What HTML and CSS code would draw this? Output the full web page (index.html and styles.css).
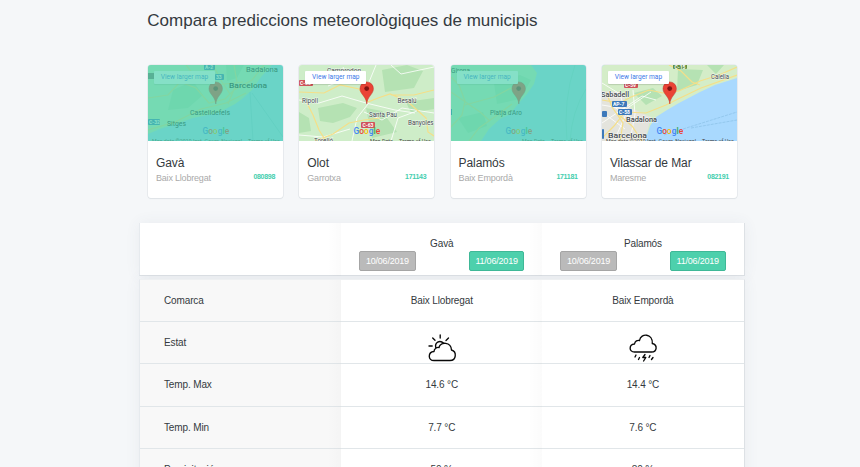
FILE: index.html
```html
<!DOCTYPE html>
<html lang="ca">
<head>
<meta charset="utf-8">
<title>Compara prediccions</title>
<link rel="stylesheet" href="styles.css">
</head>
<body>
<svg class="defs" width="0" height="0" aria-hidden="true">
  <defs>
    <g id="pin">
      <path d="M67.800 39C67.200 31 61 29.500 61 23.600a6.700 6.700 0 0 1 13.400 0C74.400 29.500 68.400 31 67.800 39z" fill="#ea4335" stroke="#b8322a" stroke-width=".5"/>
      <circle cx="67.700" cy="23.600" r="2.400" fill="#811411"/>
    </g>
  </defs>
</svg>
<main>
  <h1>Compara prediccions meteorològiques de municipis</h1>
  <section class="cards">
    <article class="card selected">
      <div class="map">
        <svg viewBox="0 0 135 76">
          <rect width="135" height="76" fill="#aadaff"/>
          <path d="M0 0H124L113 12 104 25 94 34 87 39 70 48 45 53 28 59 12 64 0 69z" fill="#cdebc2"/>
          <path d="M25 25l20-9 10 14-15 13-20 2zM78 0l18 0-7 13-10 3z" fill="#b8e2b2"/>
          <g class="road"><path d="M0 33L20 30 32 17 48 23 61 38 77 34 86 25 104 15 116 0M0 65L27 57 53 44 78 38 98 28M65 0L74 17 82 29M38 0L49 14 68 20 95 17M86 0L89 17 80 39"/></g>
          <path d="M102 27L105 76M104 28L135 72" fill="none" stroke="#82bddd" stroke-width=".5"/>
          <g class="shield blue"><rect x="56" y="-1" width="11" height="6"/><rect x="67" y="9" width="9" height="6"/><rect x="0" y="54" width="12" height="6"/></g>
          <g class="shield-text"><text x="57" y="4">A-2</text><text x="68" y="14">33</text><text x="1" y="59">C-32</text></g>
          <rect x="0" y="8" width="6" height="6" fill="#746c65"/>
          <text class="place" x="98" y="6.500" textLength="32" lengthAdjust="spacingAndGlyphs">Badalona</text>
          <text class="place city" x="81" y="23" textLength="38" lengthAdjust="spacingAndGlyphs">Barcelona</text>
          <text class="place" x="42" y="49.500" textLength="40" lengthAdjust="spacingAndGlyphs">Castelldefels</text>
          <text class="place" x="19" y="60.500" textLength="19" lengthAdjust="spacingAndGlyphs">Sitges</text>
          <use href="#pin"/>
          <text class="google" x="54.500" y="69"><tspan class="gb">G</tspan><tspan class="gr">o</tspan><tspan class="gy">o</tspan><tspan class="gb">g</tspan><tspan class="gg">l</tspan><tspan class="gr">e</tspan></text>
          <text class="credit" x="4" y="77.500" textLength="90" lengthAdjust="spacingAndGlyphs">Map data ©2019 Inst. Geogr. Nacional</text><text class="credit" x="100" y="77.500" textLength="32" lengthAdjust="spacingAndGlyphs">Terms of Use</text>
        </svg>
        <span class="larger">View larger map</span>
      </div>
      <div class="info"><h2>Gavà</h2><div class="meta"><span>Baix Llobregat</span><b>080898</b></div></div>
    </article>
    <article class="card">
      <div class="map">
        <svg viewBox="0 0 135 76">
          <rect width="135" height="76" fill="#ceedc8"/>
          <path d="M19 43l25-5 14 5-7 9-17 6-13-2zM83 5l25-5 16 6-9 17-29 4zM67 43l16 3 15 21-25 6zM107 37l28-4v11l-23 4zM0 47l10 6 2 13-12 2z" fill="#b5e2b3"/>
          <g class="small-road"><path d="M0 35L20 38 43 31 67 38 96 45 116 48M44 2L49 13 29 21M77 0L68 22 69 39 58 53 53 76M65 47l18 8 20-12 32 5M0 70l24 2 27-8M92 0l10 9 33-7M92 76l7-23 19-7"/></g>
          <g class="road"><path d="M0 27L25 28 41 20 60 24 69 37 79 33 91 29 108 36 118 45 127 53 129 67 135 71M8 38L14 50 20 65 27 76M16 76L34 69 50 58 65 55 81 53M92 30L115 30 135 25"/></g>
          <g class="shield red"><rect x="0" y="15" width="14" height="6"/><rect x="62" y="57" width="14" height="6"/></g>
          <g class="shield-text"><text x="1" y="20">C-26</text><text x="63.500" y="62">C-63</text></g>
          <text class="place" x="28" y="8" textLength="34" lengthAdjust="spacingAndGlyphs">Camprodon</text>
          <text class="place" x="3" y="38" textLength="16" lengthAdjust="spacingAndGlyphs">Ripoll</text>
          <text class="place" x="98.500" y="38" textLength="19" lengthAdjust="spacingAndGlyphs">Besalú</text>
          <text class="place" x="70" y="52" textLength="28" lengthAdjust="spacingAndGlyphs">Santa Pau</text>
          <text class="place" x="109" y="59.500" textLength="25.500" lengthAdjust="spacingAndGlyphs">Banyoles</text>
          <text class="place" x="15" y="77.500" textLength="19" lengthAdjust="spacingAndGlyphs">Torelló</text>
          <use href="#pin"/>
          <text class="google" x="54.500" y="69"><tspan class="gb">G</tspan><tspan class="gr">o</tspan><tspan class="gy">o</tspan><tspan class="gb">g</tspan><tspan class="gg">l</tspan><tspan class="gr">e</tspan></text>
          <text class="credit" x="71" y="77.500" textLength="23" lengthAdjust="spacingAndGlyphs">Map Data</text><text class="credit" x="100" y="77.500" textLength="32" lengthAdjust="spacingAndGlyphs">Terms of Use</text>
        </svg>
        <span class="larger">View larger map</span>
      </div>
      <div class="info"><h2>Olot</h2><div class="meta"><span>Garrotxa</span><b>171143</b></div></div>
    </article>
    <article class="card selected">
      <div class="map">
        <svg viewBox="0 0 135 76">
          <rect width="135" height="76" fill="#aadaff"/>
          <path d="M0 0H80L86 8 83 19 76 29 68 38 59 49 49 54 38 64 30 76H0z" fill="#cdebc2"/>
          <path d="M43 18l26-8 11 5-11 19-23 5zM7 53l25-6 4 14-19 7z" fill="#b8e2b2"/>
          <g class="road"><path d="M0 27L13 36 29 47 39 56M0 62L11 50 14 36 8 20 0 12M14 40L43 32 60 23 68 34M18 76L28 63 45 51 61 39"/></g>
          <path d="M124 0q-12 35-8 76M135 24q-14 22-16 52" fill="none" stroke="#8acbd8" stroke-width=".5"/>
          <text class="place" x="0" y="8" textLength="19" lengthAdjust="spacingAndGlyphs">Girona</text>
          <rect x="0" y="44" width="1" height="6" fill="#226ba8"/>
          <text class="place" x="39" y="50" textLength="32" lengthAdjust="spacingAndGlyphs">Platja d'Aro</text>
          <use href="#pin"/>
          <text class="google" x="54.500" y="69"><tspan class="gb">G</tspan><tspan class="gr">o</tspan><tspan class="gy">o</tspan><tspan class="gb">g</tspan><tspan class="gg">l</tspan><tspan class="gr">e</tspan></text>
          <text class="credit" x="71" y="77.500" textLength="23" lengthAdjust="spacingAndGlyphs">Map Data</text><text class="credit" x="100" y="77.500" textLength="32" lengthAdjust="spacingAndGlyphs">Terms of Use</text>
        </svg>
        <span class="larger">View larger map</span>
      </div>
      <div class="info"><h2>Palamós</h2><div class="meta"><span>Baix Empordà</span><b>171181</b></div></div>
    </article>
    <article class="card">
      <div class="map">
        <svg viewBox="0 0 135 76">
          <rect width="135" height="76" fill="#a9d9fe"/>
          <path d="M0 0H135V13L113 20 98 27 77 38 65 45 54 52 48 61 43 76H0z" fill="#d4edc8"/>
          <path d="M76 4l25 1-6 15-20 6zM32 28l19-5 9 8-16 9zM14 62l12-5 11 5-15 5zM105 0l17 0-8 9z" fill="#b5e2b3"/>
          <path d="M0 26l19 1 10 16 20 9-6 24H0z" fill="#e4e4dd"/>
          <g class="small-road"><path d="M0 18L18 29 24 49 12 76M0 58L40 31 54 35M9 40L33 55 46 53M0 40L24 44 49 27M31 25L33 49 28 76M0 47L23 64"/></g>
          <g class="road"><path d="M0 35L18 38 29 32 47 25 61 28 77 26 98 16 117 10 135 2M0 73L12 61 23 47 44 48 64 40 76 34 99 23 135 10M4 27L10 42 21 58 18 76M67 0L79 6 90 17 98 20M40 76L30 61 17 50"/></g>
          <path d="M62 70L135 47M89 63L135 55" fill="none" stroke="#7fb6dd" stroke-width=".5" stroke-dasharray="3 1"/>
          <g class="shield blue"><rect x="10" y="36" width="15" height="6"/><rect x="16" y="44" width="14" height="6"/><rect x="0" y="46" width="5" height="6"/><rect x="0" y="64" width="2" height="10"/></g>
          <g class="shield red"><rect x="22" y="17" width="14" height="6"/></g>
          <rect x="71" y="-1" width="14" height="5" rx="1" fill="#619044"/>
          <g class="shield-text"><text x="11" y="41">AP-7</text><text x="17" y="49">C-58</text><text x="23" y="22">C-59</text><text x="72.500" y="3.500">C-15</text></g>
          <text class="place" x="109" y="13.500" textLength="18" lengthAdjust="spacingAndGlyphs">Calella</text>
          <text class="place medium" x="-1" y="32" textLength="28" lengthAdjust="spacingAndGlyphs">Sabadell</text>
          <text class="place medium" x="24" y="57" textLength="31" lengthAdjust="spacingAndGlyphs">Badalona</text>
          <text class="place city" x="6" y="73" textLength="39" lengthAdjust="spacingAndGlyphs">Barcelona</text>
          <use href="#pin"/>
          <text class="google" x="54.500" y="69"><tspan class="gb">G</tspan><tspan class="gr">o</tspan><tspan class="gy">o</tspan><tspan class="gb">g</tspan><tspan class="gg">l</tspan><tspan class="gr">e</tspan></text>
          <text class="credit" x="4" y="77.500" textLength="90" lengthAdjust="spacingAndGlyphs">Map data ©2019 Inst. Geogr. Nacional</text><text class="credit" x="100" y="77.500" textLength="32" lengthAdjust="spacingAndGlyphs">Terms of Use</text>
        </svg>
        <span class="larger">View larger map</span>
      </div>
      <div class="info"><h2>Vilassar de Mar</h2><div class="meta"><span>Maresme</span><b>082191</b></div></div>
    </article>
  </section>
  <section class="comparison">
    <header class="row heading">
      <div class="label"></div>
      <div class="cell"><span>Gavà</span><div class="dates"><button>10/06/2019</button><button class="active">11/06/2019</button></div></div>
      <div class="cell"><span>Palamós</span><div class="dates"><button>10/06/2019</button><button class="active">11/06/2019</button></div></div>
    </header>
    <div class="body">
      <div class="row"><div class="label">Comarca</div><div class="cell">Baix Llobregat</div><div class="cell">Baix Empordà</div></div>
      <div class="row">
        <div class="label">Estat</div>
        <div class="cell"><svg class="weather" viewBox="0 0 30 30"><path d="M7 27.500C.7 27.500.7 19 7 18.500 7 15.500 10 14 12 14.500 13.500 8.500 24 8.500 24.500 17 30 18.500 29.500 27.500 23 27.500zM8.800 14.800C7.500 9.500 12.500 6.500 16.800 10.200M13.200 2v3M5.700 5l2.300 2.300M21.500 5l-2.500 2.500M2 13h3.200"/></svg></div>
        <div class="cell"><svg class="weather" viewBox="0 0 30 30"><path d="M6.500 19C.7 19 .7 11.500 6.500 11 7 8 9.500 7 11.500 7.500 13-.5 25 .5 24.300 10.500 30 12 29 19 23.500 19z"/><path d="M8 22l-1 2M11.500 24.500l-1 2M21 24.500l1-2M25 24.500l-1.500 2M17 21.500l-2.200 3h3l-2.200 3.500"/></svg></div>
      </div>
      <div class="row"><div class="label">Temp. Max</div><div class="cell">14.6 °C</div><div class="cell">14.4 °C</div></div>
      <div class="row"><div class="label">Temp. Min</div><div class="cell">7.7 °C</div><div class="cell">7.6 °C</div></div>
      <div class="row"><div class="label">Precipitació</div><div class="cell">50 %</div><div class="cell">80 %</div></div>
    </div>
  </section>
</main>
</body>
</html>
```
FILE: styles.css
```css
* { box-sizing: border-box; }
html, body { height: 100%; overflow: hidden; }
body { margin: 0; background: #f5f7f9; color: #343a40; font-family: "Liberation Sans", Arial, sans-serif; }
main { width: 605px; height: 467px; margin-left: 139.5px; padding-top: 10px; overflow: clip; overflow-clip-margin: 20px; }
.defs { display: block; }
h1 { margin: 0 0 34px 7.8px; font-size: 17px; line-height: 21px; font-weight: 400; }
.cards { display: grid; grid-template-columns: repeat(4, 135px); column-gap: 16.3px; margin-left: 8.5px; }
.card { height: 133px; background: #fff; border-radius: 3px; box-shadow: 0 0 0 .6px #dfe3e7, 0 1px 1px #dfe3e7; overflow: hidden; }
.map { height: 76px; position: relative; overflow: hidden; }
.map > svg { display: block; width: 135px; height: 76px; }
.selected .map::after { content: ""; position: absolute; inset: 0; background: rgba(75, 209, 172, .68); }
.selected .place { fill: #111820; stroke: none; }
.larger { position: absolute; top: 6px; left: 6px; width: 61px; height: 13px; background: #fff; border-radius: 1px; box-shadow: 0 1px 1px #0002; color: #3b78e7; font: 6.6px/13px Roboto, sans-serif; text-align: center; white-space: nowrap; }
.road path { fill: none; stroke: #f5df88; stroke-width: 1.2; }
.small-road path { fill: none; stroke: #fff; stroke-width: .8; }
.blue { fill: #3d79ba; }
.red { fill: #cf535b; }
.shield rect { rx: 1px; }
.shield-text { fill: #fff; font: bold 5px Roboto, sans-serif; }
.place { fill: #444a4e; stroke: #fff; stroke-width: .8px; stroke-opacity: .8; paint-order: stroke; font: 6.9px Roboto, sans-serif; }
.medium { font-size: 7.3px; font-weight: 500; }
.city { font-size: 8px; font-weight: 500; }
.google { font: 500 8.4px Roboto, sans-serif; }
.gb { fill: #4285f4; } .gr { fill: #ea4335; } .gy { fill: #fbbc05; } .gg { fill: #34a853; }
.credit { fill: #444; font: 5.4px Roboto, sans-serif; }
.info { padding: 14.5px 8px 0; }
h2 { margin: 0; font-size: 12px; letter-spacing: -.1px; line-height: 15px; font-weight: 400; }
.meta { display: flex; justify-content: space-between; color: #aaa; font-size: 9px; letter-spacing: -.2px; line-height: 14px; }
.meta b { color: #43ceae; font-size: 7px; letter-spacing: -.3px; line-height: 12px; }
.comparison { margin: 25px 0 0 -.5px; font-size: 10px; letter-spacing: -.13px; }
.row { display: grid; grid-template-columns: repeat(3, 1fr); height: 42.4px; border-bottom: 1px solid #e1e6e9; }
.label, .cell { position: relative; display: flex; align-items: center; background: #fff; }
.label { padding-left: 24px; }
.body .label { background: #f8f8f8; }
.cell { justify-content: center; }
.label::after, .cell:nth-child(2)::after { content: ""; position: absolute; right: 0; top: 0; bottom: -1px; width: 14px; background: linear-gradient(to right, transparent, rgba(0, 0, 0, .015)); }
.heading, .body { border-left: 1px solid #e6eaee; border-right: 1px solid #dde1e5; box-shadow: 0 0 14px rgba(70, 90, 120, .07); }
.heading { height: 52.5px; border-bottom-color: #dde1e5; }
.heading .cell { flex-direction: column; justify-content: flex-start; padding: 14px 18px 0; line-height: 14px; }
.dates { display: flex; justify-content: space-between; align-self: stretch; }
button { height: 20px; width: 56.5px; padding: 0; background: #bababa; border: 1px solid #a5a5a5; border-radius: 2px; color: #fff; font: 9px/18px "Liberation Sans", Arial, sans-serif; letter-spacing: -.2px; }
button.active { width: 55.5px; background: #4dd0ac; border-color: #3fb897; }
.body { margin-top: 3px; border-top: 1px solid #eef0f2; }
.weather { width: 30px; height: 30px; margin-top: 11px; fill: none; stroke: #080808; stroke-width: 1.35; stroke-linecap: round; stroke-linejoin: round; }
```
